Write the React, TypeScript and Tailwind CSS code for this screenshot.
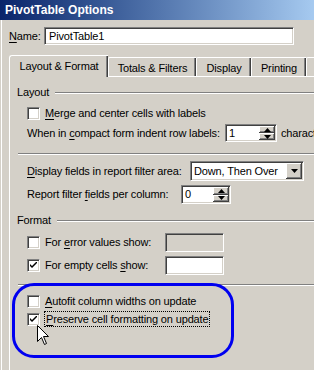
import React from "react";

const sunken = "border border-t-[#808080] border-l-[#808080] border-b-white border-r-white shadow-[inset_1px_1px_0_#404040,inset_-1px_-1px_0_#D4D0C8]";
const raised = "bg-[#D4D0C8] shadow-[inset_-1px_-1px_0_#404040,inset_1px_1px_0_#fff,inset_-2px_-2px_0_#808080]";

function U({ children }: { children: React.ReactNode }) {
  return <span className="underline underline-offset-[2px] decoration-[1px]">{children}</span>;
}

function Check({ checked }: { checked?: boolean }) {
  return (
    <div className={`w-[13px] h-[13px] bg-white shrink-0 ${sunken} flex items-center justify-center`}>
      {checked && (
        <svg width="7" height="7" viewBox="0 0 7 7">
          <path d="M0 2 L0 4 L2 6 L7 1 L7 -1 L2 4 Z" fill="#000" />
        </svg>
      )}
    </div>
  );
}

function Spinner({ value, w }: { value: string; w: number }) {
  return (
    <div className={`h-full bg-white flex items-stretch shrink-0 ${sunken}`} style={{ width: w }}>
      <div className="flex-1 pl-[3px] flex items-center">{value}</div>
      <div className="w-[16px] flex flex-col my-[1px] mr-[1px]">
        <div className={`flex-1 flex items-center justify-center ${raised}`}>
          <svg width="7" height="4" viewBox="0 0 7 4"><path d="M3.5 0 L7 4 L0 4 Z" fill="#000" /></svg>
        </div>
        <div className={`flex-1 flex items-center justify-center ${raised}`}>
          <svg width="7" height="4" viewBox="0 0 7 4"><path d="M0 0 L7 0 L3.5 4 Z" fill="#000" /></svg>
        </div>
      </div>
    </div>
  );
}

function GroupLabel({ text }: { text: string }) {
  return (
    <div className="h-[13px] flex items-center">
      <span>{text}</span>
      <div className="flex-1 ml-[6px] h-[2px] border-t border-t-[#808080] border-b border-b-white" />
    </div>
  );
}

function Tab({ label, selected, w }: { label: string; selected?: boolean; w: number }) {
  if (selected) {
    return (
      <div
        className="h-[22px] -mb-px relative z-10 bg-[#D4D0C8] border-l border-t border-white rounded-tl-[3px] shadow-[inset_-1px_0_0_#404040,inset_-2px_0_0_#808080] flex items-center justify-center pb-[1px] shrink-0 whitespace-nowrap"
        style={{ width: w }}
      >
        {label}
      </div>
    );
  }
  return (
    <div
      className="h-[19px] bg-[#D4D0C8] border-l border-t border-white rounded-tl-[2px] shadow-[inset_-1px_0_0_#404040,inset_-2px_0_0_#808080] flex items-center justify-center pt-[2px] shrink-0 whitespace-nowrap"
      style={{ width: w }}
    >
      {label}
    </div>
  );
}

export default function App() {
  return (
    <div
      className="w-[314px] h-[370px] overflow-hidden relative bg-[#D4D0C8] text-[11px] tracking-[-0.15px] text-black leading-none whitespace-nowrap"
      style={{ fontFamily: "Tahoma, 'Liberation Sans', Arial, sans-serif" }}
    >
      <div className="h-[20px] bg-gradient-to-r from-[#0A246A] to-[#A6CAF0] flex items-center pl-[5px] text-white font-bold text-[12px] tracking-normal">
        PivotTable Options
      </div>
      <div className="ml-[1px] border-l border-white h-[350px] w-[400px] flex flex-col">
        <div className="mt-[7px] h-[18px] flex items-center">
          <div className="w-[42px] pl-[7px] shrink-0"><U>N</U>ame:</div>
          <div className={`w-[250px] h-full bg-white flex items-center pl-[4px] shrink-0 ${sunken}`}>PivotTable1</div>
        </div>

        <div className="mt-[10px] pl-[7px] flex items-end h-[21px]">
          <Tab label="Layout & Format" selected w={99} />
          <Tab label="Totals & Filters" w={88} />
          <Tab label="Display" w={55} />
          <Tab label="Printing" w={55} />
          <Tab label="" w={20} />
        </div>

        <div className="ml-[7px] flex-1 border-l border-t border-white flex flex-col pl-[7px]">
          <div className="mt-[9px]"><GroupLabel text="Layout" /></div>

          <div className="mt-[7px] h-[14px] pl-[10px] flex items-center gap-[5px]">
            <Check />
            <span><U>M</U>erge and center cells with labels</span>
          </div>

          <div className="mt-[4px] h-[18px] pl-[10px] flex items-center">
            <div className="w-[198px] shrink-0">When in <U>c</U>ompact form indent row labels:</div>
            <Spinner value="1" w={52} />
            <span className="ml-[4px] shrink-0">characters</span>
          </div>

          <div className="mt-[11px] ml-[1px] h-[2px] border-t border-t-[#808080] border-b border-b-white" />

          <div className="mt-[6px] h-[20px] pl-[10px] flex items-center">
            <div className="w-[163px] shrink-0"><U>D</U>isplay fields in report filter area:</div>
            <div className={`w-[114px] h-full bg-white flex items-stretch shrink-0 ${sunken}`}>
              <div className="flex-1 flex items-center pl-[3px]">Down, Then Over</div>
              <div className={`w-[16px] my-[1px] mr-[1px] flex items-center justify-center ${raised}`}>
                <svg width="7" height="4" viewBox="0 0 7 4"><path d="M0 0 L7 0 L3.5 4 Z" fill="#000" /></svg>
              </div>
            </div>
          </div>

          <div className="mt-[4px] h-[19px] pl-[10px] flex items-center">
            <div className="w-[154px] shrink-0">Report filter <U>f</U>ields per column:</div>
            <Spinner value="0" w={50} />
          </div>

          <div className="mt-[10px]"><GroupLabel text="Format" /></div>

          <div className="mt-[6px] h-[19px] pl-[10px] flex items-center">
            <div className="w-[138px] shrink-0 flex items-center gap-[5px]">
              <Check />
              <span>For <U>e</U>rror values show:</span>
            </div>
            <div className={`w-[59px] h-full shrink-0 bg-[#D4D0C8] ${sunken}`} />
          </div>

          <div className="mt-[4px] h-[19px] pl-[10px] flex items-center">
            <div className="w-[138px] shrink-0 flex items-center gap-[5px]">
              <Check checked />
              <span>For empty cells <U>s</U>how:</span>
            </div>
            <div className={`w-[59px] h-full shrink-0 bg-white ${sunken}`} />
          </div>

          <div className="mt-[9px] ml-[1px] h-[2px] border-t border-t-[#808080] border-b border-b-white" />

          <div className="mt-[8px] h-[14px] pl-[10px] flex items-center gap-[5px]">
            <Check />
            <span><U>A</U>utofit column widths on update</span>
          </div>

          <div className="mt-[3px] h-[16px] pl-[10px] flex items-center gap-[4px]">
            <Check checked />
            <span className="h-full flex items-center px-[1px] border border-dotted border-black"><U>P</U>reserve cell formatting on update</span>
          </div>
        </div>
      </div>

      <div className="absolute left-[12px] top-[283px] w-[222px] h-[75px] border-[3px] border-[#0000F0] rounded-[22px] pointer-events-none" />

      <svg className="absolute left-[37px] top-[325px]" width="13" height="21" viewBox="0 0 13 21">
        <path d="M0.5 0.5 L0.5 16.5 L4.5 12.5 L7.5 19.5 L9.5 18.5 L6.5 11.5 L11.5 11.5 Z" fill="#fff" stroke="#000" strokeWidth="1" />
      </svg>
    </div>
  );
}
